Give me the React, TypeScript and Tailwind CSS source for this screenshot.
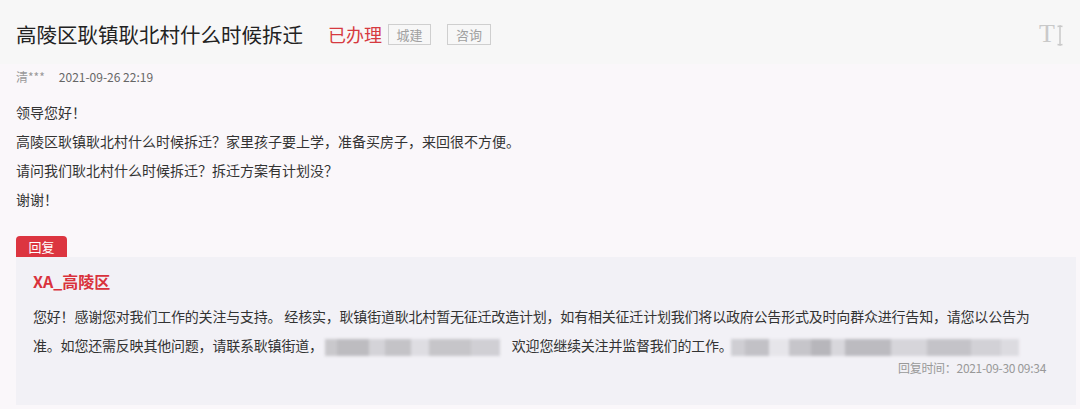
import React from 'react';

const font = { fontFamily: '"Noto Sans CJK SC", "Noto Sans", sans-serif' };

const Blur: React.FC<{ segs: [number, string][]; className?: string }> = ({ segs, className }) => (
  <span className={`inline-flex h-[17px] align-middle blur-[1.5px] ${className ?? ''}`}>
    {segs.map(([w, c], i) => (
      <span key={i} className="h-full" style={{ width: w, background: c }} />
    ))}
  </span>
);

const TextSizeIcon = () => (
  <div className="ml-auto mr-[16px] flex items-end text-[#c9c9c9]">
    <span className="text-[26px] leading-[26px]" style={{ fontFamily: '"Liberation Serif", serif' }}>
      T
    </span>
    <svg width="8" height="21" viewBox="0 0 8 21" className="ml-[1px] mb-[1px]">
      <path d="M1.5 1.5 4 1v19l-2.5-.5M6.5 1.5 4 1M6.5 19.5 4 20" stroke="#c9c9c9" strokeWidth="1.5" fill="none" />
    </svg>
  </div>
);

export default function App() {
  return (
    <div className="w-[1080px] h-[409px] overflow-hidden bg-[#faf7fa]" style={font}>
      {/* Header */}
      <div className="bg-[#f7f7f7] pl-4 pt-[19px] pb-[15px] flex items-center">
        <h1 className="text-[20.5px] leading-[30px] text-[#222] font-normal">高陵区耿镇耿北村什么时候拆迁</h1>
        <span className="ml-[25px] text-[18px] leading-[24px] text-[#d63a40]">已办理</span>
        <span className="ml-[6px] border border-[#cfcfcf] text-[#a0a0a0] text-[13px] leading-[19px] w-[43px] text-center">
          城建
        </span>
        <span className="ml-[16px] border border-[#cfcfcf] text-[#a0a0a0] text-[13px] leading-[19px] w-[44px] text-center">
          咨询
        </span>
        <TextSizeIcon />
      </div>

      <div className="px-4">
        {/* Meta */}
        <div className="flex text-[12px] leading-[18px] mt-[4px]">
          <span className="text-[#999]">清***</span>
          <span className="ml-[14px] text-[#666]">2021-09-26 22:19</span>
        </div>

        {/* Question */}
        <div className="mt-[12px] text-[14px] leading-[29px] text-[#333]">
          <p>领导您好！</p>
          <p>高陵区耿镇耿北村什么时候拆迁？家里孩子要上学，准备买房子，来回很不方便。</p>
          <p>请问我们耿北村什么时候拆迁？拆迁方案有计划没？</p>
          <p>谢谢！</p>
        </div>

        {/* Reply */}
        <div className="mt-[22px] w-[51px] h-[21px] rounded-t-[4px] bg-[#dc3540] text-white text-[13px] leading-[21px] text-center">
          回复
        </div>
        <div className="w-[1060px] bg-[#f2f1f6] pl-[17px] pr-[30px] pt-[12px] pb-[29px]">
          <div className="text-[16px] leading-[24px] font-bold text-[#d9323c]">XA_高陵区</div>
          <p className="mt-[9px] text-[14px] leading-[29px] text-[#333] whitespace-nowrap tracking-[-0.2px]">
            您好！感谢您对我们工作的关注与支持。 经核实，耿镇街道耿北村暂无征迁改造计划，如有相关征迁计划我们将以政府公告形式及时向群众进行告知，请您以公告为
            <br />
            准。如您还需反映其他问题，请联系耿镇街道，
            <Blur
              className="ml-[2px]"
              segs={[
                [12, '#c9c8cc'],
                [32, '#bdbcc0'],
                [16, '#d4d3d8'],
                [26, '#c4c3c7'],
                [18, '#dedde2'],
                [42, '#c6c5c9'],
                [29, '#d0cfd4'],
              ]}
            />
            <span className="ml-[12px]">欢迎您继续关注并监督我们的工作。</span>
            <Blur
              className="-ml-[2px]"
              segs={[
                [14, '#cfced3'],
                [24, '#c2c1c6'],
                [20, '#e6e5ea'],
                [22, '#c6c5ca'],
                [20, '#b7b6bb'],
                [14, '#d8d7dc'],
                [46, '#bcbbc0'],
                [36, '#d6d5da'],
                [44, '#c4c3c8'],
                [30, '#d2d1d6'],
                [18, '#dcdbe0'],
              ]}
            />
          </p>
          <div className="text-right text-[12px] leading-[16px] text-[#999] tracking-[-0.3px]">回复时间：2021-09-30 09:34</div>
        </div>
      </div>
    </div>
  );
}
